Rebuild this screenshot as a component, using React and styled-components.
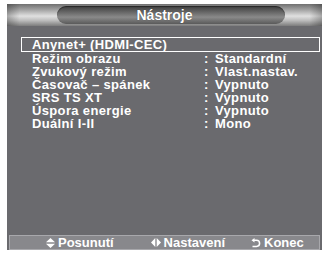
import React from "react";
import styled, { createGlobalStyle } from "styled-components";

const GlobalStyle = createGlobalStyle`
  html, body {
    margin: 0;
    padding: 0;
    background: #ffffff;
  }
  body {
    font-family: "Liberation Sans", Arial, sans-serif;
  }
`;

const Screen = styled.div`
  width: 329px;
  height: 256px;
  padding: 4px 7px 6px 7px;
  box-sizing: border-box;
`;

const Panel = styled.div`
  display: flex;
  flex-direction: column;
  width: 315px;
  height: 246px;
  background: #6a6a6e;
`;

const Header = styled.div`
  height: 22px;
  display: flex;
  align-items: center;
  justify-content: center;
  background: linear-gradient(
      90deg,
      rgba(0, 0, 0, 0.25) 0%,
      rgba(0, 0, 0, 0) 4%,
      rgba(0, 0, 0, 0) 96%,
      rgba(0, 0, 0, 0.25) 100%
    ),
    linear-gradient(
      180deg,
      #707070 0%,
      #a0a0a0 25%,
      #e0e0e0 55%,
      #bcbcbc 75%,
      #7c7c7c 100%
    );
`;

const Capsule = styled.div`
  width: 228px;
  height: 18px;
  margin-left: 12px;
  border-radius: 9px;
  display: flex;
  align-items: center;
  justify-content: center;
  background: linear-gradient(
    180deg,
    #3c3c3c 0%,
    #686868 35%,
    #8a8a8a 62%,
    #5a5a5a 100%
  );
  box-shadow: inset 0 1px 1px rgba(0, 0, 0, 0.4);
`;

const Title = styled.span`
  color: #ffffff;
  font-weight: bold;
  font-size: 14px;
  margin-left: -12px;
  text-shadow: 0 0 1px rgba(0, 0, 0, 0.6);
`;

const Body = styled.div`
  flex: 1;
  padding: 11px 2px 0 14px;
`;

const Row = styled.div`
  display: grid;
  grid-template-columns: 172px 11px 1fr;
  height: 13px;
  line-height: 13px;
  padding-left: 11px;
  color: #ffffff;
  font-weight: bold;
  font-size: 13px;
  letter-spacing: 0.35px;
  white-space: nowrap;
  box-sizing: border-box;
  ${(p) =>
    p.$selected &&
    `
    height: 15px;
    border: 1px solid #ffffff;
    padding-left: 10px;
  `}
`;

const Cell = styled.span``;

const Footer = styled.div`
  height: 13px;
  margin: 0 2px 0 2px;
  display: flex;
  align-items: center;
  background: #88888c;
  border: 1px solid #a8a8ac;
  color: #ffffff;
  font-weight: bold;
  font-size: 13px;
  line-height: 12px;
`;

const Hint = styled.span`
  display: flex;
  align-items: center;
  gap: 3px;
  margin-left: ${(p) => p.$left}px;
  white-space: nowrap;
`;

const UpDown = () => (
  <svg width="9" height="10" viewBox="0 0 9 10">
    <polygon points="4.5,0 9,4.3 0,4.3" fill="#fff" />
    <polygon points="0,5.7 9,5.7 4.5,10" fill="#fff" />
  </svg>
);

const LeftRight = () => (
  <svg width="10" height="9" viewBox="0 0 10 9">
    <polygon points="0,4.5 4.3,0 4.3,9" fill="#fff" />
    <polygon points="5.7,0 10,4.5 5.7,9" fill="#fff" />
  </svg>
);

const Return = () => (
  <svg width="10" height="10" viewBox="0 0 10 10">
    <path
      d="M2.5 2.2 H5.5 A3 3 0 0 1 5.5 8.4 H1.5"
      fill="none"
      stroke="#fff"
      strokeWidth="1.5"
    />
    <polygon points="0.5,2.2 3.5,0 3.5,4.4" fill="#fff" />
  </svg>
);

const items = [
  { label: "Anynet+ (HDMI-CEC)", selected: true },
  { label: "Režim obrazu", value: "Standardní" },
  { label: "Zvukový režim", value: "Vlast.nastav." },
  { label: "Časovač – spánek", value: "Vypnuto" },
  { label: "SRS TS XT", value: "Vypnuto" },
  { label: "Úspora energie", value: "Vypnuto" },
  { label: "Duální I-II", value: "Mono" },
];

const App = () => {
  return (
    <Screen>
      <GlobalStyle />
      <Panel>
        <Header>
          <Capsule>
            <Title>Nástroje</Title>
          </Capsule>
        </Header>
        <Body>
          {items.map((it) => (
            <Row key={it.label} $selected={it.selected}>
              <Cell>{it.label}</Cell>
              <Cell>{it.value ? ":" : ""}</Cell>
              <Cell>{it.value || ""}</Cell>
            </Row>
          ))}
        </Body>
        <Footer>
          <Hint $left={36}>
            <UpDown />
            Posunutí
          </Hint>
          <Hint $left={37}>
            <LeftRight />
            Nastavení
          </Hint>
          <Hint $left={26}>
            <Return />
            Konec
          </Hint>
        </Footer>
      </Panel>
    </Screen>
  );
};

export default App;
